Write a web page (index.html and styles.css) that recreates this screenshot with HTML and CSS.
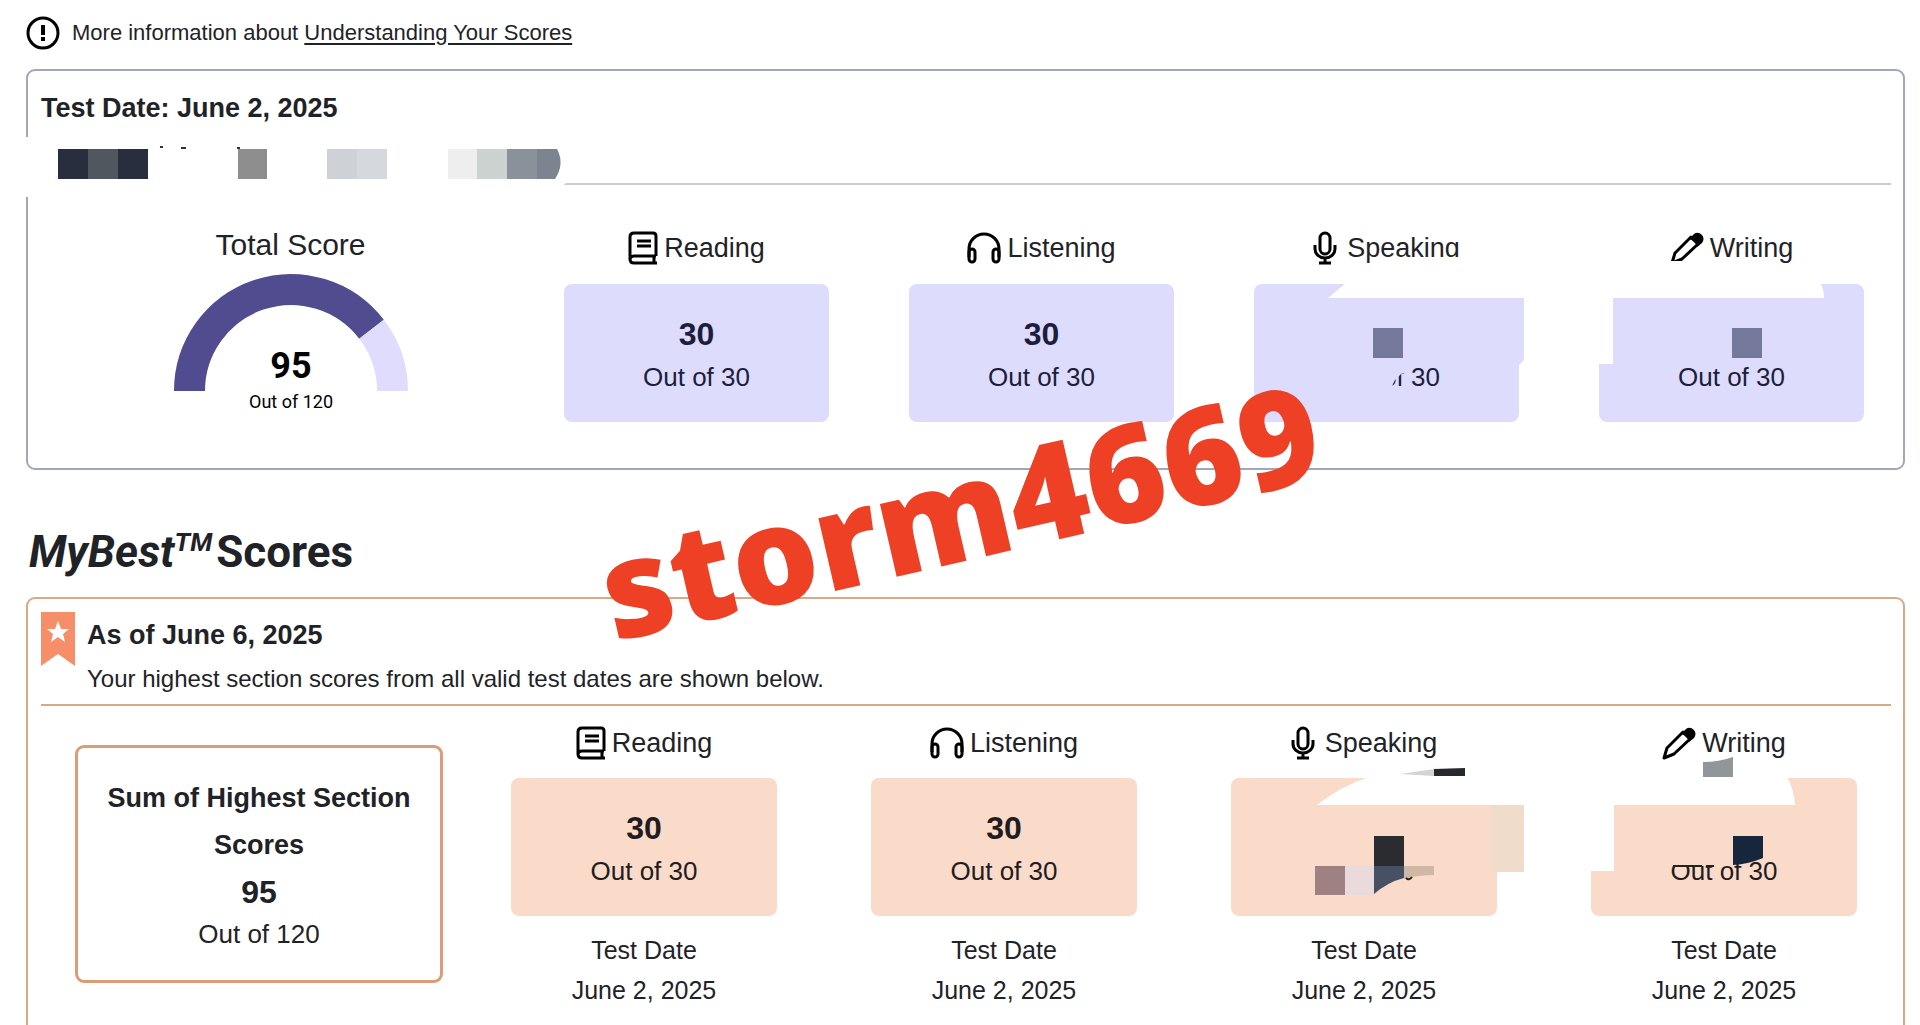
FILE: index.html
```
<!DOCTYPE HTML>
<html lang="en">
<head>
<meta charset="utf-8">
<title>Test Scores</title>
<link rel="stylesheet" href="styles.css">
</head>

<body>
<!-- shared icons -->
<svg class="defs" width="0" height="0">
	<symbol id="book" viewBox="0 0 30 34">
		<path d="M28 25V5q0-3-3-3H6Q2 2 2 6v22q0 4 4 4h23M28 25H6q-4 0-4 4M26 25v7" fill="none" stroke="#000" stroke-width="3"/>
		<path d="M9 10h14M9 15h14" stroke="#000" stroke-width="3"/>
	</symbol>
	<symbol id="headphones" viewBox="0 0 34 34">
		<path d="M2 26V18a15 15 0 0 1 30 0v8" fill="none" stroke="#000" stroke-width="3"/>
		<rect x="2" y="18" width="6" height="13" rx="3" fill="none" stroke="#000" stroke-width="3"/>
		<rect x="26" y="18" width="6" height="13" rx="3" fill="none" stroke="#000" stroke-width="3"/>
	</symbol>
	<symbol id="mic" viewBox="0 0 24 34">
		<rect x="7" y="2" width="10" height="21" rx="5" fill="none" stroke="#000" stroke-width="3"/>
		<path d="M2 14v4a10 9 0 0 0 20 0v-4M12 27v5M6 32h12" fill="none" stroke="#000" stroke-width="3"/>
	</symbol>
	<symbol id="pencil" viewBox="0 0 34 34">
		<path d="M2 32l3-10L21 6l7 7L12 28z" fill="none" stroke="#000" stroke-width="3" stroke-linejoin="round"/>
		<path d="M19 8l5-5q4-3 8 1 3 4 0 8l-5 4q-1-6-8-8z" fill="#000"/>
	</symbol>
</svg>

<p class="info">
	<svg width="34" height="34" viewBox="0 0 34 34">
		<circle cx="17" cy="17" r="15" fill="none" stroke="#000" stroke-width="3"/>
		<path d="M17 9v10M17 21v4" stroke="#000" stroke-width="4"/>
	</svg>
	<span>More information about <a href="#understanding">Understanding Your Scores</a></span>
</p>

<section class="panel test">
	<header>
		<h2>Test Date: June 2, 2025</h2>
		<svg class="mosaic" width="540" height="60" viewBox="0 0 540 60">
			<path d="M0 0h540v46l-15 14H0z" fill="#fff"/>
			<path d="M32 12h30v30H32zM92 12h30v30H92z" fill="#282e3e"/>
			<path d="M62 12h30v30H62z" fill="#50575e"/>
			<path d="M134 9h3v2h-3zM155 10h5v2h-5zM211 10h3v2h-3z" fill="#333"/>
			<path d="M212 12h29v30h-29z" fill="#8d8d8d"/>
			<path d="M301 12h30v30h-30z" fill="#ced1d6"/>
			<path d="M331 12h30v30h-30z" fill="#d5d9de"/>
			<path d="M422 12h29v30h-29z" fill="#eee"/>
			<path d="M451 12h30v30h-30z" fill="#cbd2cf"/>
			<path d="M481 12h30v30h-30z" fill="#89919b"/>
			<path d="M511 12h20q8 15-2 30h-18z" fill="#7c8490"/>
		</svg>
	</header>
	<div class="scores">
		<div class="total">
			<h3>Total Score</h3>
			<svg width="236" height="146" viewBox="0 0 236 146">
				<path d="M16.500 118A101.500 101.500 0 0 1 198.500 56.200" fill="none" stroke="#514c8f" stroke-width="31"/>
				<path d="M198.500 56.200A101.500 101.500 0 0 1 219.500 118" fill="none" stroke="#e0dcfd" stroke-width="31"/>
				<text class="gauge-num" x="118" y="105">95</text>
				<text class="gauge-max" x="118" y="135">Out of 120</text>
			</svg>
		</div>
		<div class="section">
			<h3><svg width="30" height="34"><use href="#book"/></svg>Reading</h3>
			<div class="card"><b>30</b><span>Out of 30</span></div>
		</div>
		<div class="section">
			<h3><svg width="34" height="34"><use href="#headphones"/></svg>Listening</h3>
			<div class="card"><b>30</b><span>Out of 30</span></div>
		</div>
		<div class="section">
			<h3><svg class="mic" width="24" height="34"><use href="#mic"/></svg>Speaking</h3>
			<div class="card"><b>&nbsp;</b><span>Out of 30</span>
				<svg class="smudge" width="265" height="138">
					<path d="M140-27h80v14h-80z" fill="#fff"/>
					<path d="M92-1L74 14h196v-15z" fill="#fff"/>
					<path d="M264 14h6v62l-6 6z" fill="#dddcfd"/>
					<path d="M75 80h78v8l-6 2-6 6-4 8H75z" fill="#dddcfd"/>
					<path d="M119 44h30v30h-30z" fill="#74789a"/>
				</svg>
			</div>
		</div>
		<div class="section">
			<h3><svg width="34" height="34"><use href="#pencil"/></svg>Writing</h3>
			<div class="card"><b>&nbsp;</b><span>Out of 30</span>
				<svg class="smudge" width="265" height="138">
					<path d="M66-23h30v6h-30z" fill="#fff"/>
					<path d="M-1-1h222q4 6 4 15H14v66H-1z" fill="#fff"/>
					<path d="M133 44h30v30h-30z" fill="#74789a"/>
				</svg>
			</div>
		</div>
	</div>
</section>

<h1><i>MyBest<sup>TM</sup></i> <span>Scores</span></h1>

<section class="panel best">
	<header>
		<svg class="flag" width="34" height="54" viewBox="0 0 34 54">
			<path d="M0 0h34v54L17 42 0 54z" fill="#f68f69"/>
			<path d="M17 9l3 8h8l-6 5 2 8-7-5-7 5 2-8-6-5h8z" fill="#fff"/>
		</svg>
		<div>
			<h2>As of June 6, 2025</h2>
			<p>Your highest section scores from all valid test dates are shown below.</p>
		</div>
	</header>
	<div class="scores">
		<div class="sum">
			<h3>Sum of Highest Section Scores</h3>
			<b>95</b>
			<span>Out of 120</span>
		</div>
		<div class="section">
			<h3><svg width="30" height="34"><use href="#book"/></svg>Reading</h3>
			<div class="card"><b>30</b><span>Out of 30</span></div>
			<p>Test Date<br>June 2, 2025</p>
		</div>
		<div class="section">
			<h3><svg width="34" height="34"><use href="#headphones"/></svg>Listening</h3>
			<div class="card"><b>30</b><span>Out of 30</span></div>
			<p>Test Date<br>June 2, 2025</p>
		</div>
		<div class="section">
			<h3><svg class="mic" width="24" height="34"><use href="#mic"/></svg>Speaking</h3>
			<div class="card"><b>&nbsp;</b><span>Out of 30</span>
				<svg class="smudge" width="265" height="138">
					<path d="M138-1Q110 8 86 27h180v-28z" fill="#fff"/>
					<path d="M169-4l34-5v7z" fill="#d4d4d4"/>
					<path d="M203-9l31-1v8h-31z" fill="#26282b"/>
					<path d="M260 27h33v67h-33z" fill="#efdccb"/>
					<path d="M80 84h108v27H80z" fill="#fadac8"/>
					<path d="M84 88h30v29H84z" fill="#a08182"/>
					<path d="M114 88h29v29h-29z" fill="#eadadb"/>
					<path d="M143 58h30v30h-30z" fill="#2a2c2f"/>
					<path d="M143 88h30v12q-16 4-30 16z" fill="#485064"/>
					<path d="M173 88h30v9q-16 0-30 4z" fill="#d1b8a6"/>
					<path d="M175 100q3 3 6-1" fill="none" stroke="#222" stroke-width="2"/>
				</svg>
			</div>
			<p>Test Date<br>June 2, 2025</p>
		</div>
		<div class="section">
			<h3><svg width="34" height="34"><use href="#pencil"/></svg>Writing</h3>
			<div class="card"><b>&nbsp;</b><span>Out of 30</span>
				<svg class="smudge" width="265" height="138">
					<path d="M-1-1h197q7 12 8 28H23v66H-1z" fill="#fff"/>
					<path d="M112-16q16 0 30-5v20h-30z" fill="#919699"/>
					<path d="M78 78h64v10H78z" fill="#fadac8"/>
					<path d="M82 88h29M115 88h8" stroke="#222" stroke-width="2"/>
					<path d="M142 58h30v22q-14 6-30 7z" fill="#16263c"/>
				</svg>
			</div>
			<p>Test Date<br>June 2, 2025</p>
		</div>
	</div>
</section>

<div class="watermark">storm4669</div>
</body>
</html>
```
FILE: styles.css
```
*{
	margin: 0;
	padding: 0;
	box-sizing: border-box;
}

body{
	position: relative;
	padding: 16px 15px 0 26px;
	font-family: "Liberation Sans", Arial, sans-serif;
	font-size: 26px;
	color: #1f2328;
	background-color: #fff;
	overflow-x: hidden;
}
svg{
	display: block;
	flex: none;
}
.defs{
	position: absolute;
}

.info{
	display: flex;
	align-items: center;
	gap: 12px;
	font-size: 22px;
	margin-bottom: 19px;
}
.info a{
	color: inherit;
	text-underline-offset: 3px;
}

.panel{
	border: 2px solid #a3a5bd;
	border-radius: 9px;
}
.panel header{
	position: relative;
	margin: 0 12px 0 13px;
	border-bottom: 2px solid #ccc;
}
h2{
	font-size: 27px;
	line-height: 36px;
}
.test header{
	padding: 19px 0 57px;
}
.mosaic{
	position: absolute;
	left: -15px;
	bottom: -14px;
}

.scores{
	display: flex;
	align-items: flex-start;
	text-align: center;
}
.scores h3{
	font-weight: normal;
	line-height: 40px;
}
.test .scores{
	padding-bottom: 46px;
}
.total{
	flex: 1;
	padding: 40px 0 0 30px;
}
.total h3{
	font-size: 30px;
}
.total svg{
	margin: 8px auto 0;
}
text{
	text-anchor: middle;
	fill: #000;
}
.gauge-num{
	font-family: Roboto, sans-serif;
	font-size: 36px;
	font-weight: bold;
}
.gauge-max{
	font-family: Roboto, sans-serif;
	font-size: 18px;
}

.section{
	width: 18.4%;
	padding: 43px 39px 0 41px;
}
.section h3{
	display: flex;
	align-items: center;
	justify-content: center;
	gap: 6px;
	font-size: 27px;
}
.section h3 .mic{
	margin-right: 4px;
}
.card{
	position: relative;
	margin-top: 16px;
	padding: 30px 0 27px;
	border-radius: 8px;
	background-color: #dddcfd;
	color: #1d1d3d;
}
.card b,
.card span{
	display: block;
	line-height: 36px;
}
.card b,
.sum b{
	font-size: 32px;
}
.card b{
	line-height: 40px;
	margin-bottom: 5px;
}
.smudge{
	position: absolute;
	left: 0;
	top: 0;
	overflow: visible;
}

h1{
	display: flex;
	gap: 4px;
	margin: 52px 0 15px 3px;
	font-family: Roboto, sans-serif;
	font-size: 44px;
	line-height: 60px;
}
h1 sup{
	font-size: 26px;
	line-height: 0;
}

.best{
	border-color: #d9a985;
	padding-bottom: 40px;
}
.best header{
	display: flex;
	gap: 12px;
	padding: 13px 0 7px;
	border-color: #d9a985;
}
.best header h2{
	margin: 5px 0 8px;
}
.best header p{
	font-size: 24px;
	line-height: 36px;
}
.best .section{
	width: 19.2%;
	padding: 17px 46px 0 48px;
}
.best .card{
	margin-top: 15px;
	background-color: #fadac8;
	color: #221c20;
}
.best .section p{
	margin-top: 14px;
	font-size: 25px;
	line-height: 40px;
	white-space: nowrap;
}
.sum{
	flex: 1;
	margin: 39px 20px 0 47px;
	padding: 27px 20px 28px;
	border: 3px solid #db9c78;
	border-radius: 9px;
}
.sum h3{
	font-size: 27px;
	font-weight: bold;
}
.sum h3,
.sum b{
	display: block;
	line-height: 47px;
}
.sum span{
	line-height: 36px;
}

.watermark{
	position: absolute;
	left: 593px;
	top: 417px;
	font-family: "Noto Sans", sans-serif;
	font-size: 135px;
	font-weight: 900;
	color: #ee4025;
	transform: rotate(-13deg);
}
```
